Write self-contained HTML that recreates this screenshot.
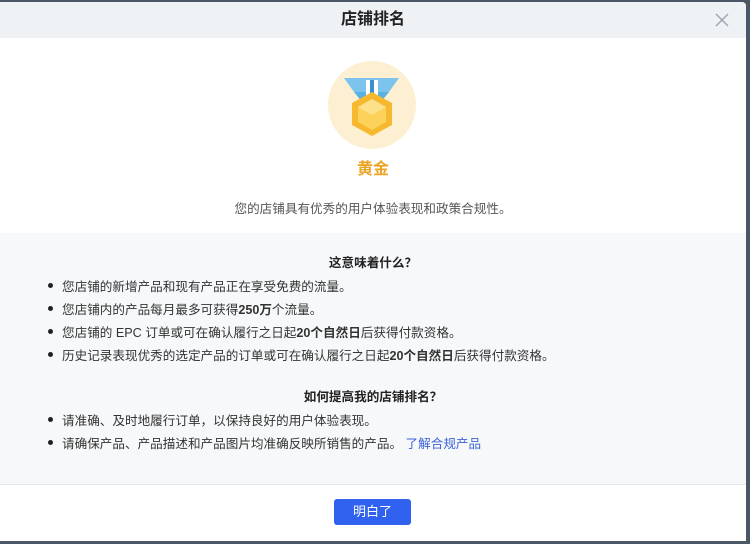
<!DOCTYPE html>
<html><head><meta charset="utf-8"><style>
*{margin:0;padding:0;box-sizing:border-box}
body{width:750px;height:544px;background:#4a5866;font-family:"Liberation Sans","Noto Sans CJK SC",sans-serif;overflow:hidden;position:relative}
.dlg{position:absolute;left:0;top:2px;width:746px;height:539px;background:#fff;border-radius:0 4px 0 0;overflow:hidden}
.hd{height:36px;background:#eef2f5;text-align:center;font-size:16px;font-weight:bold;color:#222;line-height:36px}
.x{position:absolute;right:16px;top:10px;width:16px;height:16px}
.top{height:195px;text-align:center;position:relative}
.circ{position:absolute;left:328px;top:23px;width:88px;height:88px;border-radius:50%;background:#fdf0d2}
.gold{position:absolute;left:0;width:746px;top:117px;font-size:16px;font-weight:bold;color:#eba526}
.desc{position:absolute;left:0;width:746px;top:160px;font-size:12.6px;color:#555}
.mid{height:252px;background:#f7f8fa;border-bottom:1px solid #e3e6ea;position:relative;font-size:12.6px;color:#333}
.h{position:absolute;left:0;width:746px;text-align:center;font-weight:bold;color:#222}
.li{position:absolute;left:62px;white-space:nowrap}
.li:before{content:"";position:absolute;left:-14px;top:7px;width:5px;height:5px;border-radius:50%;background:#222}
.btn{position:absolute;left:334px;top:499px;width:77px;height:26px;background:#3061ef;border-radius:3px;color:#fff;font-size:13px;text-align:center;line-height:26px}
</style></head><body>
<div class="dlg">
<div class="hd">店铺排名</div>
<svg class="x" viewBox="0 0 16 16"><path d="M2 2L14 14M14 2L2 14" stroke="#9aa3ab" stroke-width="1.3"/></svg>
<div class="top">
<div class="circ"></div>
<svg style="position:absolute;left:344px;top:40px" width="56" height="60" viewBox="0 0 56 60">
<path d="M0 0H55L45 14H10Z" fill="#7cc4ee"/>
<path d="M10 14L45 14 37 24 18 24Z" fill="#5ab1e4"/>
<rect x="22" y="2" width="4" height="22" fill="#fff"/><rect x="30" y="2" width="4" height="22" fill="#fff"/>
<rect x="26" y="2" width="4" height="22" fill="#3a8fd0"/>
<polygon points="28,14 48,25 48,47 28,58 8,47 8,25" fill="#f5b82e"/>
<polygon points="28,21 42,29 42,44 28,52 14,44 14,29" fill="#fcd25a"/>
<polygon points="28,21 42,29 28,37 14,29" fill="#fde08a"/>
</svg>
<div class="gold">黄金</div>
<div class="desc">您的店铺具有优秀的用户体验表现和政策合规性。</div>
</div>
<div class="mid">
<div class="h" style="top:19px">这意味着什么？</div>
<div class="li" style="top:43px">您店铺的新增产品和现有产品正在享受免费的流量。</div>
<div class="li" style="top:66px">您店铺内的产品每月最多可获得<b>250万</b>个流量。</div>
<div class="li" style="top:89px">您店铺的 EPC 订单或可在确认履行之日起<b>20个自然日</b>后获得付款资格。</div>
<div class="li" style="top:112px">历史记录表现优秀的选定产品的订单或可在确认履行之日起<b>20个自然日</b>后获得付款资格。</div>
<div class="h" style="top:153px">如何提高我的店铺排名？</div>
<div class="li" style="top:177px">请准确、及时地履行订单，以保持良好的用户体验表现。</div>
<div class="li" style="top:200px">请确保产品、产品描述和产品图片均准确反映所销售的产品。 <span style="color:#3a62d8">了解合规产品</span></div>
</div>
</div>
<div class="btn">明白了</div>
</body></html>
